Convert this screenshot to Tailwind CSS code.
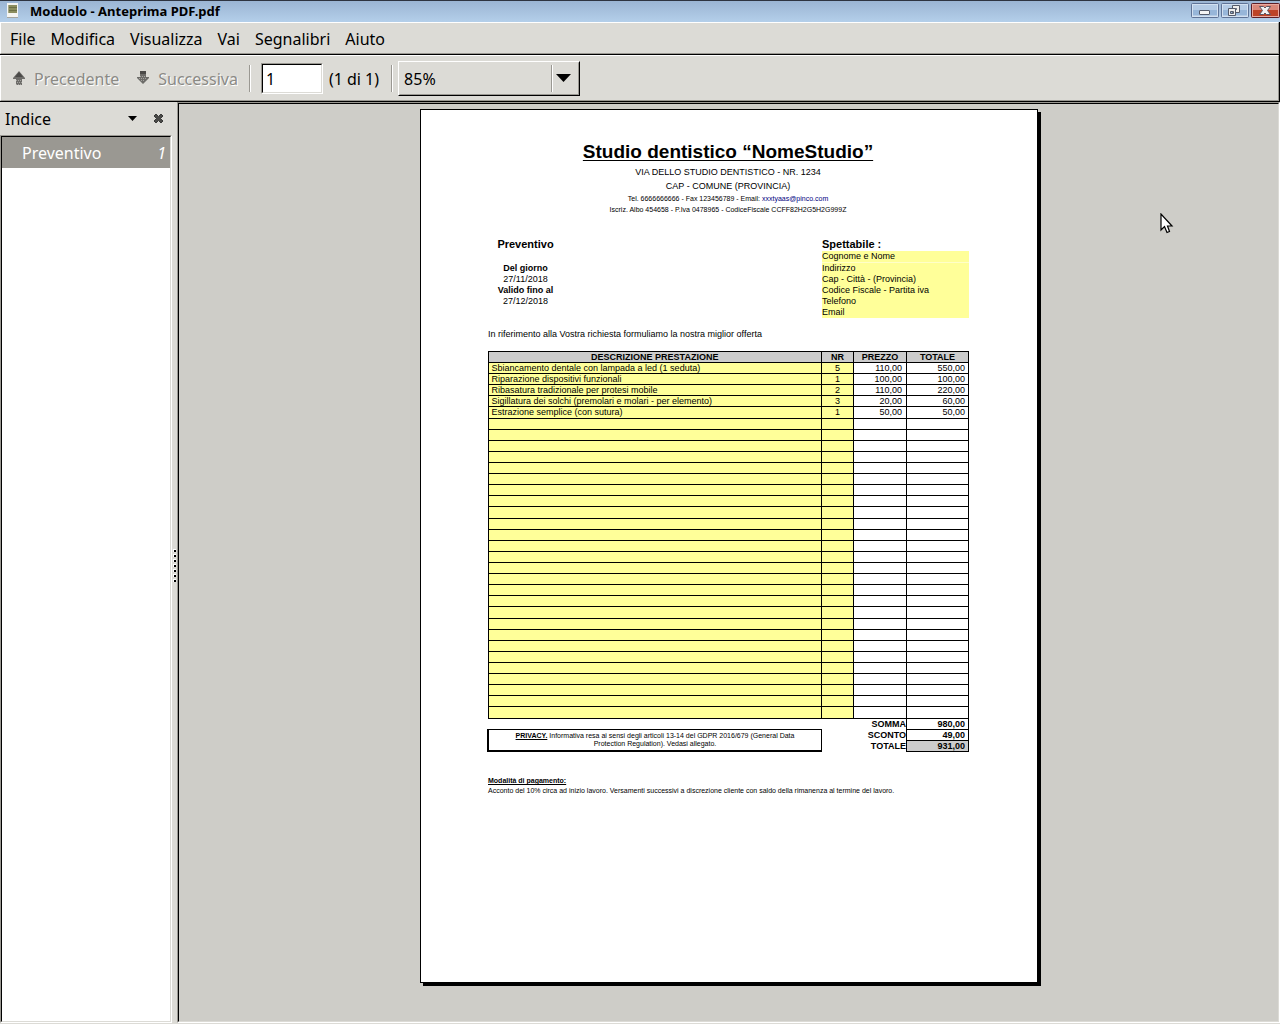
<!DOCTYPE html>
<html lang="it">
<head>
    <meta charset="UTF-8">
    <meta name="viewport" content="width=device-width, initial-scale=1.0">
    <title>Moduolo - Anteprima PDF.pdf</title>
    <script src="https://cdn.jsdelivr.net/npm/@tailwindcss/browser@4"></script>
</head>
<body class="relative flex flex-col h-screen overflow-hidden bg-[#dcdbd6] font-['Noto_Sans',sans-serif] text-base text-black">

    <!-- title bar -->
    <header class="flex items-start shrink-0 h-[22px] pl-[6px] border-t border-[#2e3440] bg-linear-to-b from-[#9bb5d3] to-[#b4cfea]">
        <svg class="w-3 h-4 mt-px mr-3" viewBox="0 0 12 16" shape-rendering="crispEdges">
            <path d="M1 1h11v15H1z" fill="#f4f4f1"/>
            <path d="M1 15h11v1H1z" fill="#a5a5a0"/>
            <path d="M2 3h9v8H2z" fill="#8b8d5e"/>
            <path d="M2 5h9v1H2zM2 8h9v1H2z" fill="#6c6f45"/>
            <path d="M2 3h1v8H2z" fill="#a7a988"/>
        </svg>
        <h1 class="text-[13px] leading-5 font-bold">Moduolo - Anteprima PDF.pdf</h1>
        <div class="flex gap-[2px] mt-[2px] ml-auto">
            <button aria-label="Riduci a icona">
                <svg class="w-7 h-[15px]" viewBox="0 0 28 15">
                    <rect x=".5" y=".5" width="27" height="14" rx="1" fill="#b4cbe5" stroke="#5f7396"/>
                    <path d="M2 7h24v5H2z" fill="#97b6d9"/>
                    <rect x="1.5" y="1.5" width="25" height="12" fill="none" stroke="#d3e1f1"/>
                    <rect x="8.500" y="7.500" width="10" height="4" rx=".5" fill="#f4f4f4" stroke="#545b6b"/>
                </svg>
            </button>
            <button aria-label="Ripristina">
                <svg class="w-7 h-[15px]" viewBox="0 0 28 15">
                    <rect x=".5" y=".5" width="27" height="14" rx="1" fill="#b4cbe5" stroke="#5f7396"/>
                    <path d="M2 7h24v5H2z" fill="#97b6d9"/>
                    <rect x="1.5" y="1.5" width="25" height="12" fill="none" stroke="#d3e1f1"/>
                    <path d="M11.500 2.500h7v7h-7zM14.500 5.500h1v1h-1z" fill="#eee" fill-rule="evenodd" stroke="#545b6b"/>
                    <path d="M7.500 5.500h7v7h-7zM9.500 8.500h3v2h-3z" fill="#eee" fill-rule="evenodd" stroke="#545b6b"/>
                </svg>
            </button>
            <button aria-label="Chiudi">
                <svg class="w-[29px] h-[15px]" viewBox="0 0 29 15">
                    <rect x=".5" y=".5" width="28" height="14" rx="1" fill="#d98779" stroke="#5d1f26"/>
                    <path d="M2 7h25v6H2z" fill="#bd4327"/>
                    <rect x="1.500" y="1.500" width="26" height="12" fill="none" stroke="#e9a99f"/>
                    <path d="M8.500 3.500h4l1.500 1.500 1.500-1.500h4l-3 4 3 4h-4L14 10l-1.500 1.500h-4l3-4z" fill="#f2f2f2" stroke="#5b5560"/>
                </svg>
            </button>
        </div>
    </header>

    <!-- menu bar -->
    <nav class="shrink-0 h-[33px] border-r border-b border-black">
        <div class="flex items-center gap-px h-8 pt-px pl-[2px] border-t border-t-white border-l border-l-white border-r border-b border-r-[#9a9892] border-b-[#9a9892]">
            <button class="px-[7px]">File</button>
            <button class="px-[7px]">Modifica</button>
            <button class="px-[7px]">Visualizza</button>
            <button class="px-[7px]">Vai</button>
            <button class="px-[7px]">Segnalibri</button>
            <button class="px-[7px]">Aiuto</button>
        </div>
    </nav>

    <!-- toolbar -->
    <div class="shrink-0 h-[47px] border-r border-b border-black">
        <div class="flex items-center h-[46px] pl-[11px] border-t border-t-white border-l border-l-white border-r border-b border-r-[#9a9892] border-b-[#9a9892]">
            <button disabled class="flex items-center gap-2 pt-[2px] text-[#8b8a85] [text-shadow:1px_1px_0_#fff]">
                <svg class="w-[14px] h-4" viewBox="0 0 14 16">
                    <path d="M7 0l6 7v1h-3v6H4V8H1V7z" fill="#6d6c69"/>
                    <path d="M7 1l4 5H3z" fill="#4b4a48"/>
                    <path d="M4 9.500h6M5 11.500h6M4 13.500h6" stroke="#a5a4a0" stroke-dasharray="1 1"/>
                </svg>
                Precedente
            </button>
            <button disabled class="flex items-center gap-2 ml-[17px] pt-[2px] text-[#8b8a85] [text-shadow:1px_1px_0_#fff]">
                <svg class="w-[14px] h-4" viewBox="0 0 14 16">
                    <path d="M7 13l6-6V6h-3V0H4v6H1v1z" fill="#6d6c69"/>
                    <path d="M4 0h6v3H4z" fill="#4b4a48"/>
                    <path d="M3 7.500h8M4 5.500h6M5 9.500h4" stroke="#a5a4a0" stroke-dasharray="1 1"/>
                </svg>
                Successiva
            </button>
            <div class="w-[2px] h-[27px] ml-[11px] bg-[#9a9892] border-r border-white"></div>
            <div class="w-[62px] h-[31px] ml-[10px] border border-t-[#9a9892] border-l-[#9a9892] border-r-white border-b-white">
                <input aria-label="Pagina" value="1" class="block w-full h-[29px] px-[3px] pt-[2px] bg-white outline-none border border-t-black border-l-black border-r-[#dcdbd6] border-b-[#dcdbd6]">
            </div>
            <span class="ml-[6px] pt-[2px]">(1 di 1)</span>
            <div class="w-[2px] h-[27px] ml-[12px] bg-[#9a9892] border-r border-white"></div>
            <div class="relative w-[182px] h-[35px] ml-[5px] border border-t-white border-l-white border-r-black border-b-black">
                <select aria-label="Zoom" class="block w-full h-[33px] pl-1 pt-[2px] appearance-none bg-[#dcdbd6] outline-none border border-t-[#dcdbd6] border-l-[#dcdbd6] border-r-[#9a9892] border-b-[#9a9892]">
                    <option>85%</option>
                </select>
                <div class="absolute inset-y-[3px] right-[26px] w-[2px] bg-[#9a9892] border-r border-white pointer-events-none"></div>
                <svg class="absolute top-3 right-2 w-[15px] h-2 pointer-events-none" viewBox="0 0 15 8"><path d="M0 0h15L7.500 8z"/></svg>
            </div>
        </div>
    </div>

    <div class="flex grow min-h-0">
        <!-- sidebar -->
        <aside class="flex flex-col shrink-0 w-[172px] pb-px">
            <div class="flex items-center shrink-0 h-[33px] pl-[5px] pr-2">
                <h2 class="mr-auto">Indice</h2>
                <button aria-label="Scegli pannello" class="mr-4">
                    <svg class="w-[9px] h-[5px]" viewBox="0 0 9 5"><path d="M0 0h9L4.500 5z"/></svg>
                </button>
                <button aria-label="Nascondi pannello">
                    <svg class="w-[11px] h-[11px]" viewBox="0 0 11 11"><path d="M3 1l2.500 2.500L8 1l2 2-2.500 2.500L10 8l-2 2-2.500-2.500L3 10 1 8l2.500-2.500L1 3z" fill="#4a4a48" stroke="#3a3a38"/></svg>
                </button>
            </div>
            <div class="grow border border-t-[#9a9892] border-l-[#9a9892] border-r-white border-b-white">
                <div class="h-full bg-white border border-t-black border-l-black border-r-[#dcdbd6] border-b-[#dcdbd6]">
                    <button class="flex items-center justify-between w-full h-[31px] pl-5 pr-1 bg-[#9a9892] text-white">
                        <span>Preventivo</span><i>1</i>
                    </button>
                </div>
            </div>
        </aside>

        <!-- splitter -->
        <div class="flex flex-col items-center justify-center gap-[2px] shrink-0 w-[5px] pt-1">
            <div class="w-[3px] h-[3px] pt-px pl-px bg-white"><div class="w-[2px] h-[2px] bg-black"></div></div>
            <div class="w-[3px] h-[3px] pt-px pl-px bg-white"><div class="w-[2px] h-[2px] bg-black"></div></div>
            <div class="w-[3px] h-[3px] pt-px pl-px bg-white"><div class="w-[2px] h-[2px] bg-black"></div></div>
            <div class="w-[3px] h-[3px] pt-px pl-px bg-white"><div class="w-[2px] h-[2px] bg-black"></div></div>
            <div class="w-[3px] h-[3px] pt-px pl-px bg-white"><div class="w-[2px] h-[2px] bg-black"></div></div>
            <div class="w-[3px] h-[3px] pt-px pl-px bg-white"><div class="w-[2px] h-[2px] bg-black"></div></div>
            <div class="w-[3px] h-[3px] pt-px pl-px bg-white"><div class="w-[2px] h-[2px] bg-black"></div></div>
        </div>

        <!-- document view -->
        <main class="grow mb-px border border-t-[#9a9892] border-l-[#9a9892] border-r-white border-b-white">
            <div class="flex justify-center items-start h-full pt-[5px] pl-px overflow-hidden bg-[#cecdc8] border border-t-black border-l-black border-r-[#dcdbd6] border-b-[#dcdbd6]">
                <article class="w-[618px] aspect-[618/874] pt-[30px] pl-[66px] pr-[68px] bg-white border border-black shadow-[3px_3px_0_#000] font-['Liberation_Sans',Arial,sans-serif] text-[9px] leading-[11px]">
                    <div class="text-center">
                        <h2 class="mb-px text-[19px] leading-6 font-bold underline underline-offset-2 decoration-1">Studio dentistico “NomeStudio”</h2>
                        <p class="leading-[14px]">VIA DELLO STUDIO DENTISTICO - NR. 1234</p>
                        <p class="leading-[14px]">CAP - COMUNE (PROVINCIA)</p>
                        <p class="text-[7px]">Tel. 6666666666 - Fax 123456789 - Email: <a href="mailto:xxxtyaas@pinco.com" class="text-[#000080]">xxxtyaas@pinco.com</a></p>
                        <p class="text-[7px]">Iscriz. Albo 454658 - P.Iva 0478965 - CodiceFiscale CCFF82H2G5H2G999Z</p>
                    </div>

                    <div class="flex justify-between mt-[23px]">
                        <div class="w-[77px] text-center">
                            <h3 class="text-[11px] leading-[13px] mb-3 font-bold">Preventivo</h3>
                            <p class="font-bold">Del giorno</p>
                            <p>27/11/2018</p>
                            <p class="font-bold">Valido fino al</p>
                            <p>27/12/2018</p>
                        </div>
                        <div class="w-[147px]">
                            <h3 class="text-[11px] leading-[13px] font-bold">Spettabile :</h3>
                            <div class="bg-[#ffff99]">
                                <p class="border-b border-[#ffffc8]">Cognome e Nome</p>
                                <p>Indirizzo</p>
                                <p>Cap - Città - (Provincia)</p>
                                <p>Codice Fiscale - Partita iva</p>
                                <p>Telefono</p>
                                <p>Email</p>
                            </div>
                        </div>
                    </div>

                    <p class="mt-[11px] pl-px">In riferimento alla Vostra richiesta formuliamo la nostra miglior offerta</p>

                    <table class="w-full h-[401px] mt-[11px] table-fixed border-collapse leading-[10px]">
                        <colgroup>
                            <col>
                            <col class="w-8">
                            <col class="w-[53px]">
                            <col class="w-[62px]">
                        </colgroup>
                        <thead>
                            <tr class="bg-[#cccccc]">
                                <th class="border border-black">DESCRIZIONE PRESTAZIONE</th>
                                <th class="border border-black">NR</th>
                                <th class="border border-black">PREZZO</th>
                                <th class="border border-black">TOTALE</th>
                            </tr>
                        </thead>
                        <tbody id="righe"></tbody>
                        <tfoot class="font-bold text-right">
                            <tr>
                                <td></td>
                                <td colspan="2">SOMMA</td>
                                <td class="pr-[3px] border border-black">980,00</td>
                            </tr>
                            <tr>
                                <td rowspan="2" class="px-3 border border-b-2 border-l-2 border-black text-[7px] leading-2 font-normal text-center"><b class="underline">PRIVACY.</b> Informativa resa ai sensi degli articoli 13-14 del GDPR 2016/679 (General Data Protection Regulation). Vedasi allegato.</td>
                                <td colspan="2">SCONTO</td>
                                <td class="pr-[3px] border border-black">49,00</td>
                            </tr>
                            <tr>
                                <td colspan="2">TOTALE</td>
                                <td class="pr-[3px] border border-black bg-[#cccccc]">931,00</td>
                            </tr>
                        </tfoot>
                    </table>

                    <div class="mt-6 pl-px text-[7px] leading-[10px]">
                        <h4 class="font-bold underline">Modalità di pagamento:</h4>
                        <p>Acconto del 10% circa ad inizio lavoro. Versamenti successivi a discrezione cliente con saldo della rimanenza al termine del lavoro.</p>
                    </div>
                </article>
            </div>
        </main>
    </div>

    <!-- mouse pointer -->
    <svg class="absolute left-[1160px] top-[213px] w-[14px] h-[22px] pointer-events-none" viewBox="0 0 14 22">
        <path d="M1 1v16l3.500-3.500L7 19.500l2.500-1L7.500 13H12z" fill="#fff" stroke="#000" stroke-width="1.200"/>
    </svg>

    <script>
    const prestazioni = [
        ['Sbiancamento dentale con lampada a led (1 seduta)', '5', '110,00', '550,00'],
        ['Riparazione dispositivi funzionali', '1', '100,00', '100,00'],
        ['Ribasatura tradizionale per protesi mobile', '2', '110,00', '220,00'],
        ['Sigillatura dei solchi (premolari e molari - per elemento)', '3', '20,00', '60,00'],
        ['Estrazione semplice (con sutura)', '1', '50,00', '50,00'],
    ];
    const cellClasses = [
        'pl-[3px] border border-black bg-[#ffff99]',
        'text-center border border-black bg-[#ffff99]',
        'pr-1 text-right border border-black',
        'pr-[3px] text-right border border-black',
    ];
    const righe = document.getElementById('righe');

    // the form always has 32 rows, the unused ones stay blank
    for (let i = 0; i < 32; i++) {
        const row = righe.insertRow();
        row.className = 'h-[11px]';
        cellClasses.forEach((classes, col) => {
            const cell = row.insertCell();
            cell.className = classes;
            cell.textContent = prestazioni[i] ? prestazioni[i][col] : '';
        });
    }
    </script>
</body>
</html>
